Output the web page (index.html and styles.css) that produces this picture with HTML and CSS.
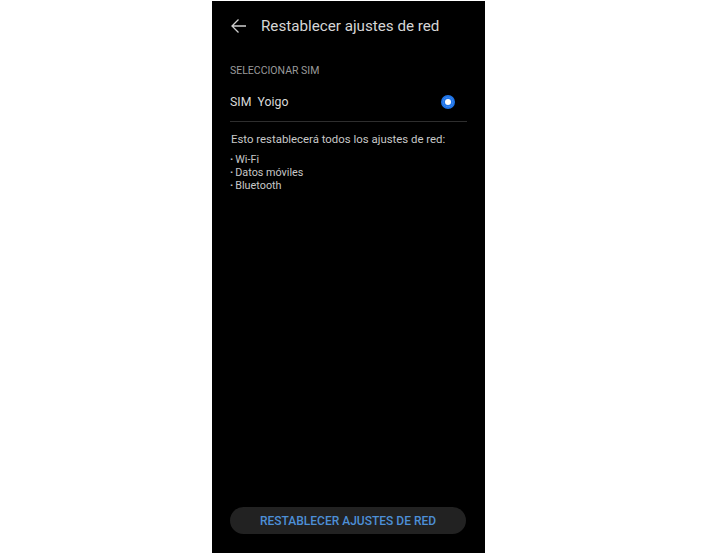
FILE: index.html
```html
<!DOCTYPE html>
<html lang="es">
<head>
    <meta charset="UTF-8">
    <meta name="viewport" content="width=device-width, initial-scale=1.0">
    <title>Restablecer ajustes de red</title>
    <link rel="stylesheet" href="styles.css">
</head>
<body>
    <div class="phone">
        <div class="title-bar">
            <svg class="back" width="16" height="16" viewBox="0 0 16 16">
                <path d="M15 8H1.5M7.5 1.5L1 8l6.5 6.5" fill="none" stroke="#cfcfcf" stroke-width="1.3"/>
            </svg>
            <h1>Restablecer ajustes de red</h1>
        </div>

        <div class="section-label">SELECCIONAR SIM</div>
        <div class="sim-row">
            <span>SIM&nbsp; Yoigo</span>
            <span class="radio"></span>
        </div>

        <div class="info">
            <p>Esto restablecerá todos los ajustes de red:</p>
            <ul>
                <li>Wi-Fi</li>
                <li>Datos móviles</li>
                <li>Bluetooth</li>
            </ul>
        </div>

        <div class="footer">
            <button>RESTABLECER AJUSTES DE RED</button>
        </div>
    </div>
</body>
</html>
```

FILE: styles.css
```css
body {
    margin: 0;
    padding: 0;
    background-color: #fff;
    font-family: Roboto, "Liberation Sans", sans-serif;
}

.phone {
    width: 273px;
    height: 552px;
    margin: 1px 0 0 212px;
    background-color: #000;
    display: flex;
    flex-direction: column;
    box-sizing: border-box;
    padding: 0 18px;
}

.title-bar {
    height: 50px;
    display: flex;
    align-items: center;
}

.back {
    margin-left: 1px;
    margin-right: 14px;
}

.title-bar h1 {
    margin: 0;
    font-size: 15.2px;
    font-weight: 400;
    color: #d6d6d6;
}

.section-label {
    margin-top: 13px;
    font-size: 10.5px;
    color: #9a9a9a;
    line-height: 13px;
}

.sim-row {
    height: 38px;
    padding: 6px 12px 0 0;
    display: flex;
    align-items: center;
    justify-content: space-between;
    border-bottom: 1px solid #2e2e2e;
    font-size: 12.3px;
    color: #d8d8d8;
}

.radio {
    width: 10px;
    height: 10px;
    border-radius: 50%;
    background-color: #1f74e8;
    border: 2px solid #1f74e8;
    box-shadow: inset 0 0 0 2px #1f74e8, inset 0 0 0 5px #fff;
}

.info {
    color: #c8c8c8;
}

.info p {
    margin: 10px 0 6px 1px;
    font-size: 11.4px;
    line-height: 15px;
}

.info ul {
    margin: 0;
    padding: 0;
    list-style: none;
    font-size: 10.8px;
    line-height: 13px;
}

.info li::before {
    content: "\00b7";
    font-weight: 700;
    margin-right: 2px;
}

.footer {
    margin-top: auto;
    padding-bottom: 19px;
}

.footer button {
    width: 236px;
    height: 27px;
    border: none;
    border-radius: 14px;
    background-color: #222;
    color: #4d8fd6;
    font-family: Roboto, "Liberation Sans", sans-serif;
    font-size: 12px;
    font-weight: 500;
    cursor: pointer;
}
```
